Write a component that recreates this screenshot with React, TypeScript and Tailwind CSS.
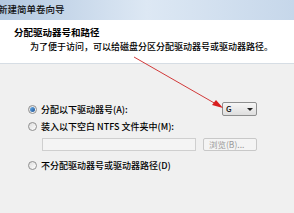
import React from "react";

const font = { fontFamily: '"Noto Sans CJK SC", "Noto Sans", sans-serif' };

function Radio({ checked }: { checked?: boolean }) {
  return (
    <span className="flex h-[9px] w-[9px] shrink-0 items-center justify-center rounded-full border border-[#8f8f8f] bg-gradient-to-br from-[#dcdcdc] to-[#ffffff]">
      {checked && (
        <span className="h-[5px] w-[5px] rounded-full bg-gradient-to-br from-[#6fb6f0] to-[#1c4f91]" />
      )}
    </span>
  );
}

export default function App() {
  return (
    <div
      className="relative h-[213px] w-[294px] overflow-hidden bg-[#f0f0f0] text-[9px] font-medium leading-none text-black"
      style={font}
    >
      {/* title bar */}
      <div className="flex h-[20px] items-center bg-gradient-to-r from-[#b3c8e0] via-[#dde8f4] to-[#c6d7ea]">
        <span className="-ml-[2px] text-[9.5px] text-[#111]">新建简单卷向导</span>
      </div>

      {/* header */}
      <div className="h-[44px] border-b border-[#d6dde4] bg-white pl-[14px] pt-[8px]">
        <div className="text-[9.5px] font-bold">分配驱动器号和路径</div>
        <div className="mt-[4px] pl-[16px]">为了便于访问，可以给磁盘分区分配驱动器号或驱动器路径。</div>
      </div>

      {/* body */}
      <div className="flex flex-col pl-[28px] pr-[37px]">
        <div className="mt-[38px] flex h-[14px] items-center">
          <Radio checked />
          <span className="ml-[4px]">分配以下驱动器号(A):</span>
          <div className="ml-auto flex h-[14px] w-[35px] items-center justify-between rounded-[2px] border border-[#8e8f8f] bg-gradient-to-b from-[#f6f6f6] to-[#dedede] pl-[3px] pr-[3px]">
            <span className="text-[8px]">G</span>
            <span className="h-0 w-0 border-x-[3px] border-t-[3px] border-x-transparent border-t-[#222]" />
          </div>
        </div>

        <div className="mt-[4px] flex h-[12px] items-center">
          <Radio />
          <span className="ml-[4px]">装入以下空白 NTFS 文件夹中(M):</span>
        </div>

        <div className="mt-[6px] flex h-[13px] items-stretch pl-[14px]">
          <div className="w-[154px] border border-[#cfcfcf] bg-[#f4f4f4]" />
          <div className="ml-auto flex w-[54px] items-center rounded-[2px] border border-[#c8c8c8] bg-[#f4f4f4] pl-[5px] text-[8.5px] font-normal text-[#9a9a9a]">
            浏览(B)...
          </div>
        </div>

        <div className="mt-[8px] flex h-[12px] items-center">
          <Radio />
          <span className="ml-[4px]">不分配驱动器号或驱动器路径(D)</span>
        </div>
      </div>

      {/* red annotation arrow */}
      <svg className="absolute left-0 top-0" width="294" height="213" viewBox="0 0 294 213">
        <line x1="134" y1="57" x2="216" y2="104" stroke="#d23a3a" strokeWidth="1" />
        <polygon points="223,108 212,105 216,100" fill="#d81e1e" />
      </svg>
    </div>
  );
}
